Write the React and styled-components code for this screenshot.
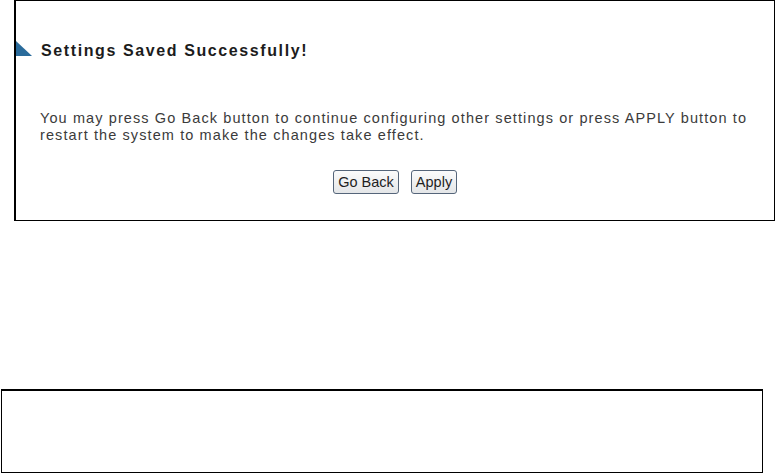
import styled, {createGlobalStyle} from 'styled-components';

const GlobalStyle = createGlobalStyle`
  html, body {
    margin: 0;
    padding: 0;
    background: #ffffff;
  }
  body {
    font-family: "Liberation Sans", Arial, sans-serif;
  }
`;

const Page = styled.div`
  width: 775px;
  height: 473px;
  display: flex;
  flex-direction: column;
  overflow: hidden;
`;

const MessagePanel = styled.div`
  box-sizing: border-box;
  margin-left: 14px;
  width: 761px;
  height: 221px;
  border: 1px solid #000;
  border-left-width: 2px;
  display: flex;
  flex-direction: column;
`;

const Heading = styled.div`
  display: flex;
  align-items: flex-end;
  gap: 9px;
  margin-top: 40px;
`;

const Marker = styled.svg`
  flex: none;
  margin-bottom: 3px;
`;

const Title = styled.h1`
  margin: 0;
  font-size: 16px;
  line-height: 16px;
  font-weight: bold;
  letter-spacing: 1.6px;
  color: #1c1c1c;
`;

const Message = styled.p`
  margin: 51px 0 0 24px;
  font-size: 14.5px;
  line-height: 16.5px;
  letter-spacing: 1.1px;
  color: #3b3b3b;
`;

const ButtonRow = styled.div`
  display: flex;
  justify-content: center;
  gap: 12px;
  margin-top: 27px;
`;

const Button = styled.button`
  box-sizing: border-box;
  height: 24px;
  width: ${(p) => p.$width}px;
  padding: 0;
  border: 1px solid #55657a;
  border-radius: 3px;
  background: linear-gradient(#fbfbfb, #e4e6e8);
  font-family: "Liberation Sans", Arial, sans-serif;
  font-size: 14.5px;
  color: #1e1e1e;
`;

const EmptyPanel = styled.div`
  box-sizing: border-box;
  margin-top: 168px;
  margin-left: 1px;
  width: 762px;
  height: 84px;
  border: 1.5px solid #000;
  border-top-width: 2.5px;
`;

export default function App() {
  return (
    <>
      <GlobalStyle />
      <Page>
        <MessagePanel>
          <Heading>
            <Marker width="16" height="15" viewBox="0 0 16 15">
              <polygon points="0,0 0,15 16,15" fill="#2a6b9b" />
            </Marker>
            <Title>Settings Saved Successfully!</Title>
          </Heading>
          <Message>
            You may press Go Back button to continue configuring other settings or press APPLY button to
            <br />
            restart the system to make the changes take effect.
          </Message>
          <ButtonRow>
            <Button $width={66}>Go Back</Button>
            <Button $width={46}>Apply</Button>
          </ButtonRow>
        </MessagePanel>
        <EmptyPanel />
      </Page>
    </>
  );
}
